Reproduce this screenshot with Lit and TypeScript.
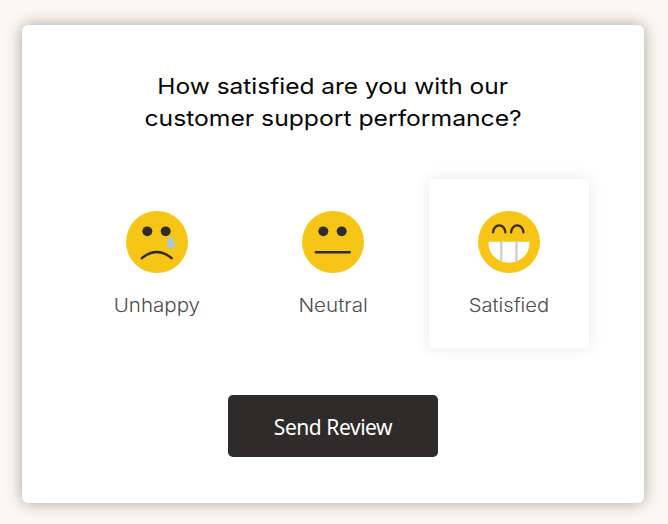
import { LitElement, html, css, svg } from "lit";
import { customElement, property, state } from "lit/decorators.js";
import { classMap } from "lit/directives/class-map.js";

type Mood = "unhappy" | "neutral" | "satisfied";

const faces = {
  unhappy: svg`
    <circle cx="21.5" cy="20.5" r="5" fill="#302b2b"/>
    <circle cx="40" cy="20.5" r="5" fill="#302b2b"/>
    <path d="M16 47.5Q31 35 46 47.5" fill="none" stroke="#302b2b" stroke-width="2.4" stroke-linecap="round"/>
    <path d="M45.500 25C43.500 28.500 41.300 30.500 41.300 34a3.900 4 0 0 0 7.800 0C49.100 30.500 47 28.500 45.500 25Z" fill="#a9c6e3"/>`,
  neutral: svg`
    <circle cx="21.5" cy="20.5" r="5" fill="#302b2b"/>
    <circle cx="40" cy="20.5" r="5" fill="#302b2b"/>
    <path d="M14 41.5H48" stroke="#302b2b" stroke-width="2.5" stroke-linecap="round"/>`,
  satisfied: svg`
    <path d="M15.200 21.500a6.200 7 0 0 1 12.400 0M33.400 21.500a6.200 7 0 0 1 12.400 0" fill="none" stroke="#3a2c1c" stroke-width="2.400" stroke-linecap="round"/>
    <path d="M10.500 31H52V32C52 44 42.500 52 31.200 52S10.500 44 10.500 32Z" fill="#fff"/>
    <path d="M23.500 31V50.500M38.700 31V50.500" stroke="#c9cbcf" stroke-width="2.200"/>`,
};

@customElement("rating-option")
export class RatingOption extends LitElement {
  @property() mood: Mood = "neutral";
  @property() label = "";
  @property({ type: Boolean }) active = false;

  static styles = css`
    :host { display: block; }
    .option {
      box-sizing: border-box; width: 160px; height: 169px; padding: 32px 0 0;
      display: flex; flex-direction: column; align-items: center; gap: 20px;
      border: 0; border-radius: 4px; background: transparent; cursor: pointer;
    }
    .active { background: #fff; box-shadow: 0 0 16px rgba(0, 0, 0, 0.09); }
    svg { display: block; width: 62px; height: 62px; }
    .label {
      font: 300 18.5px/24px Inter, "Open Sans", sans-serif; color: #4c4c4c;
      white-space: nowrap;
    }
    .unhappy { transform: scaleX(1.11); }
    .neutral { transform: scaleX(1.115); }
    .satisfied { transform: scaleX(1.09); }
  `;

  render() {
    return html`<button class=${classMap({ option: true, active: this.active })} aria-pressed=${this.active}>
      <svg viewBox="0 0 62.5 62.5" aria-hidden="true">
        <circle cx="31.25" cy="31.25" r="31.25" fill="#f6c516"/>${faces[this.mood]}
      </svg>
      <span class="label ${this.mood}">${this.label}</span>
    </button>`;
  }
}

@customElement("app-root")
export class AppRoot extends LitElement {
  @state() private selected: Mood = "satisfied";

  private options: { mood: Mood; label: string }[] = [
    { mood: "unhappy", label: "Unhappy" },
    { mood: "neutral", label: "Neutral" },
    { mood: "satisfied", label: "Satisfied" },
  ];

  static styles = css`
    :host {
      display: block; box-sizing: border-box; height: 524px;
      padding: 25px 24px 21px 22px; background: #fcf7f0; overflow: hidden;
    }
    .panel {
      box-sizing: border-box; height: 478px; padding-top: 45px;
      display: flex; flex-direction: column; align-items: center;
      background: #fff; border-radius: 6px; box-shadow: 0 0 16px rgba(0, 0, 0, 0.34);
    }
    h1 {
      margin: 0; display: flex; flex-direction: column; align-items: center;
      font: 370 22px/32px Inter, "Open Sans", sans-serif; color: #050505;
    }
    .first { transform: scaleX(1.112); }
    .second { transform: scaleX(1.122); }
    .ratings { display: flex; gap: 16px; margin-top: 45px; }
    .send {
      width: 210px; height: 62px; margin-top: 47px; padding: 1px 0 0; border: 0; border-radius: 5px;
      background: #302b2b; color: #fff; cursor: pointer;
      font: 400 21px/28px "Noto Sans", sans-serif; letter-spacing: -0.45px;
    }
  `;

  render() {
    return html`<main class="panel">
      <h1><span class="first">How satisfied are you with our</span><span class="second">customer support performance?</span></h1>
      <div class="ratings">
        ${this.options.map((o) => html`<rating-option
          .mood=${o.mood} .label=${o.label} .active=${this.selected === o.mood}
          @click=${() => (this.selected = o.mood)}></rating-option>`)}
      </div>
      <button class="send">Send Review</button>
    </main>`;
  }
}
